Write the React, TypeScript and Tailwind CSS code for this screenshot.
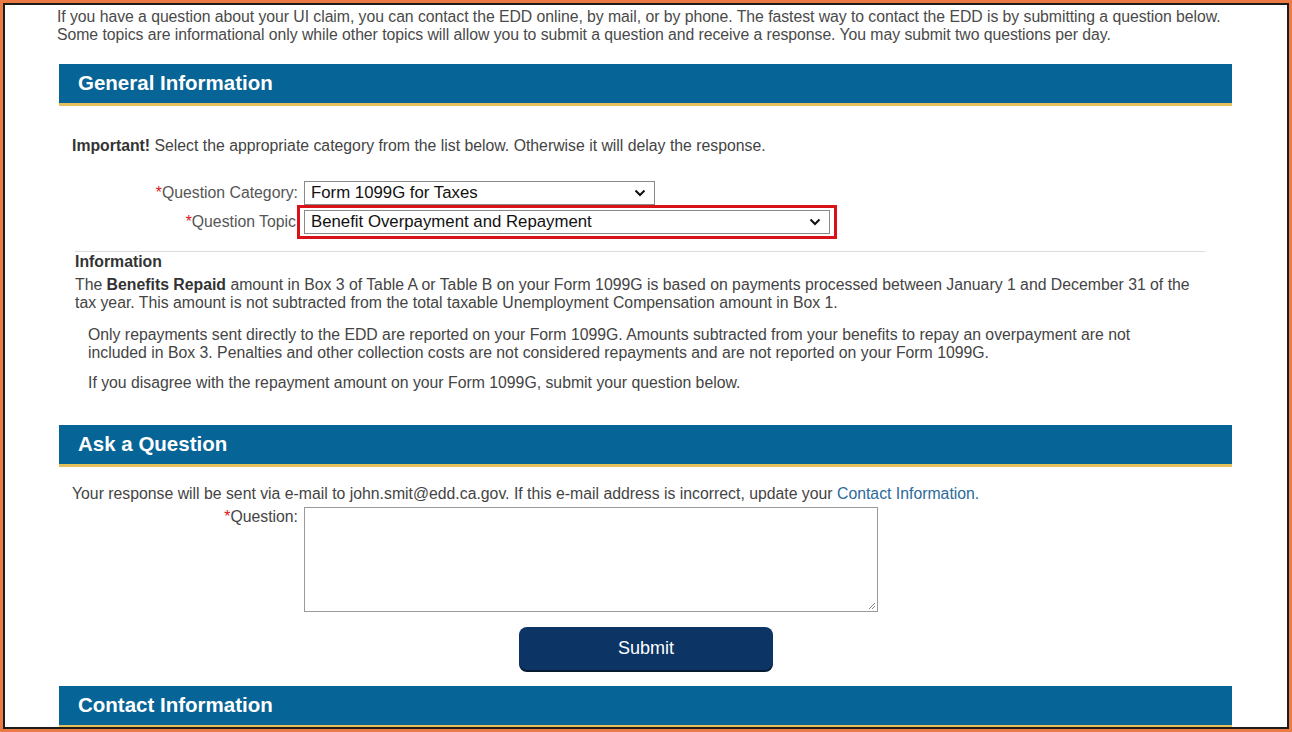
export default function App() {
  return (
    <div className="h-[732px] w-[1292px] overflow-hidden bg-[#ec7a45] p-[3px] font-['Liberation_Sans',Arial,sans-serif] text-[#3a3a3a]">
      <div className="h-full w-full overflow-hidden border-2 border-[#1c1c1c] bg-white">
        <div className="pl-[52px] pr-[55px] pt-[3px]">
          {/* Intro */}
          <p className="text-[15.8px] leading-[18px] tracking-[-0.05px] text-[#4a4a4a]">
            If you have a question about your UI claim, you can contact the EDD online, by mail, or by phone. The fastest way to contact the EDD is by submitting a question below.
            Some topics are informational only while other topics will allow you to submit a question and receive a response. You may submit two questions per day.
          </p>

          {/* General Information */}
          <SectionHeader title="General Information" className="mt-[20px]" />

          <p className="mt-[31px] pl-[15px] text-[15.8px] leading-[18px] text-[#444]">
            <span className="font-bold text-[#333]">Important!</span> Select the appropriate category from the list below. Otherwise it will delay the response.
          </p>

          <div className="mt-[26px] flex items-center">
            <Label text="Question Category:" width="w-[241px]" />
            <FakeSelect value="Form 1099G for Taxes" width="w-[351px]" className="ml-[6px]" />
          </div>
          <div className="flex items-center">
            <Label text="Question Topic" width="w-[239px]" />
            <div className="ml-[1px] border-[3px] border-[#d9121a] px-[4px] py-[2px]">
              <FakeSelect value="Benefit Overpayment and Repayment" width="w-[526px]" />
            </div>
          </div>

          <div className="ml-[18px] mr-[27px] mt-[12px] border-t border-[#dcdcdc]">
            <h3 className="text-[15.8px] font-bold leading-[20px] text-[#333]">Information</h3>
            <p className="mt-[4px] text-[15.8px] leading-[18px] text-[#444]">
              The <b className="text-[#333]">Benefits Repaid</b> amount in Box 3 of Table A or Table B on your Form 1099G is based on payments processed between January 1 and December 31 of the tax year. This amount is not subtracted from the total taxable Unemployment Compensation amount in Box 1.
            </p>
            <div className="mt-[14px] pl-[13px] text-[15.8px] leading-[18px] text-[#444]">
              <p>
                Only repayments sent directly to the EDD are reported on your Form 1099G. Amounts subtracted from your benefits to repay an overpayment are not
                <br />
                included in Box 3. Penalties and other collection costs are not considered repayments and are not reported on your Form 1099G.
              </p>
              <p className="mt-[12px]">If you disagree with the repayment amount on your Form 1099G, submit your question below.</p>
            </div>
          </div>

          {/* Ask a Question */}
          <SectionHeader title="Ask a Question" className="mt-[33px]" />

          <p className="mt-[18px] pl-[15px] text-[15.8px] leading-[18px] text-[#444]">
            Your response will be sent via e-mail to john.smit@edd.ca.gov. If this e-mail address is incorrect, update your{" "}
            <span className="text-[#2b6a9a]">Contact Information.</span>
          </p>

          <div className="mt-[4px] flex items-start">
            <div className="w-[241px] pt-[1px] text-right text-[15.8px] leading-[18px] text-[#444]">
              <span className="text-[#d9121a]">*</span>Question:
            </div>
            <div className="relative ml-[6px] h-[105px] w-[574px] border border-[#9a9a9a] bg-white">
              <svg className="absolute bottom-[1px] right-[1px]" width="9" height="9" viewBox="0 0 9 9">
                <path d="M8 2L2 8M8 5L5 8" stroke="#888" strokeWidth="1" />
              </svg>
            </div>
          </div>

          <div className="mt-[15px] flex">
            <button className="ml-[462px] h-[43px] w-[254px] rounded-[8px] bg-[#0c3566] text-[18px] text-white shadow-[0_2px_0_#061a33]">
              Submit
            </button>
          </div>

          {/* Contact Information */}
          <SectionHeader title="Contact Information" className="mt-[16px]" />
        </div>
      </div>
    </div>
  );
}

function SectionHeader({ title, className = "" }: { title: string; className?: string }) {
  return (
    <div className={`ml-[2px] border-b-[3px] border-[#e6c05b] ${className}`}>
      <div className="flex h-[39px] items-center bg-[#076496] pl-[19px] text-[20.5px] font-bold text-white">
        {title}
      </div>
    </div>
  );
}

function Label({ text, width }: { text: string; width: string }) {
  return (
    <div className={`${width} whitespace-nowrap text-right text-[15.8px] leading-[18px] text-[#555]`}>
      <span className="text-[#d9121a]">*</span>
      {text}
    </div>
  );
}

function FakeSelect({ value, width, className = "" }: { value: string; width: string; className?: string }) {
  return (
    <div
      className={`flex h-[24px] ${width} ${className} items-center justify-between border border-[#8a8a8a] bg-white pl-[6px] pr-[8px] text-[16.8px] text-[#111]`}
    >
      <span>{value}</span>
      <svg width="12" height="8" viewBox="0 0 12 8">
        <path d="M1.5 1.5L6 6L10.5 1.5" fill="none" stroke="#111" strokeWidth="2" />
      </svg>
    </div>
  );
}
